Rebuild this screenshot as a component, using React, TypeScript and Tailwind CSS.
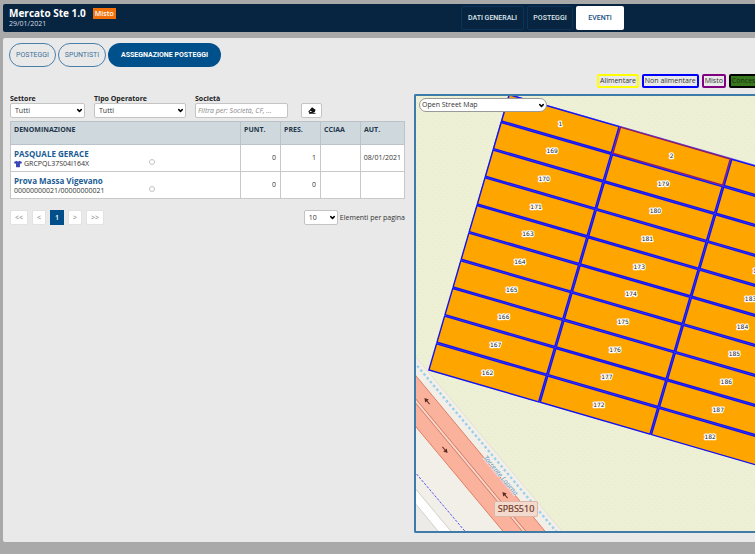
import React from "react";
import { ChevronDown } from "lucide-react";
import { FaTshirt } from "react-icons/fa";

const ROW = { x: -8.08, y: 27.67 };
const COL = { x: 111.3, y: 32.3 };
const ORIGIN = { x: 144.3, y: 27.8 };

const stalls = [
  ["1", "169", "170", "171", "163", "164", "165", "166", "167", "162"],
  ["2", "179", "180", "181", "173", "174", "175", "176", "177", "172"],
  ["", "", "", "190", "183", "184", "185", "186", "187", "182"],
];

function Stall({ col, row, label }: { col: number; row: number; label: string }) {
  const cx = ORIGIN.x + COL.x * col + ROW.x * row;
  const cy = ORIGIN.y + COL.y * col + ROW.y * row;
  const corner = (a: number, b: number) =>
    `${cx + COL.x * a * 0.493 + ROW.x * b * 0.472},${cy + COL.y * a * 0.493 + ROW.y * b * 0.472}`;
  const points = [corner(-1, -1), corner(1, -1), corner(1, 1), corner(-1, 1)].join(" ");
  return (
    <g>
      <polygon points={points} fill="#ffa500" stroke={label === "2" ? "#8b1a6b" : "#1414f0"} strokeWidth="1.4" />
      {label && (
        <text
          x={cx}
          y={cy + 2}
          textAnchor="middle"
          fontSize="6"
          fill="#222"
          stroke="#fff"
          strokeWidth="2.4"
          paintOrder="stroke"
          strokeLinejoin="round"
          fontFamily="'DejaVu Sans', sans-serif"
        >
          {label}
        </text>
      )}
    </g>
  );
}

function Arrow({ x, y, angle }: { x: number; y: number; angle: number }) {
  return (
    <g transform={`translate(${x} ${y}) rotate(${angle})`}>
      <path d="M-4 0H2" stroke="#5c2a20" strokeWidth="1" />
      <path d="M4 0L0 -2.3V2.3Z" fill="#5c2a20" />
    </g>
  );
}

function StallMap() {
  return (
    <svg className="block size-full" role="img" aria-label="Mappa dei posteggi">
      <defs>
        <pattern id="grass" width="6" height="6" patternUnits="userSpaceOnUse">
          <rect width="6" height="6" fill="#eef0d5" />
          <rect x="1" y="1" width="1" height="1" fill="#e6ebcd" />
          <rect x="4" y="4" width="1" height="1" fill="#e6ebcd" />
        </pattern>
      </defs>
      <rect width="100%" height="100%" fill="url(#grass)" />
      <polygon points="-2,259 150,440 -2,440" fill="#f2efe9" stroke="#e5dfd0" strokeWidth="1" />
      <path d="M-2 266L144 440" stroke="#9bcfe9" strokeWidth="2.4" strokeDasharray="2.5 2.5" />
      <polygon points="-2,277.5 133,440 91,440 -2,328.500" fill="#fab29c" stroke="#dc7f62" strokeWidth="1" />
      <path d="M-2 303L112 440" stroke="#c9705a" strokeWidth="3.4" />
      <path d="M-2 303L112 440" stroke="#f9d6c9" strokeWidth="2" />
      <path d="M-2 375L53 440" stroke="#5454f0" strokeWidth="1" strokeDasharray="2.5 1.5" />
      <polygon points="-2,391 39,440 -2,440" fill="#fff" stroke="#cfcfcf" strokeWidth="1" />
      <polygon points="-2,406 26,440 -2,440" fill="#edebe8" stroke="#cfcfcf" strokeWidth="1" />
      <Arrow x={11} y={305} angle={-130} />
      <Arrow x={29} y={354} angle={50} />
      <Arrow x={89} y={399} angle={-130} />
      <text
        transform="translate(67 362) rotate(50)"
        fontSize="7"
        fontStyle="italic"
        fill="#5f98bd"
        stroke="#f2efe9"
        strokeWidth="1"
        paintOrder="stroke"
        fontFamily="'Noto Sans', sans-serif"
      >
        Torrente Loorna
      </text>
      <rect x="78.5" y="405.5" width="43" height="15" rx="1.5" fill="#f3dacf" stroke="#dfb5a6" />
      <text x="100" y="416" textAnchor="middle" fontSize="9" fill="#743c28" stroke="#743c28" strokeWidth="0.2" fontFamily="'Noto Sans', sans-serif">
        SPBS510
      </text>
      <polygon points="92.7,-2.2 426,93.8 346,370.8 13,274.3" fill="#5a5aff" />
      {stalls.map((column, col) =>
        column.map((label, row) => <Stall key={`${col}-${row}`} col={col} row={row} label={label} />),
      )}
    </svg>
  );
}

function EraserIcon() {
  return (
    <svg viewBox="0 0 16 14" className="h-[7px] w-2" aria-hidden="true">
      <path d="M8 0.5L15 5.5L13.5 10.5L9 12H3L0.5 9.5Z" fill="#111" />
      <path d="M3 9.5L5 7.5L8.5 10H4Z" fill="#fff" />
      <path d="M2 13H15" stroke="#111" strokeWidth="1.5" />
    </svg>
  );
}

function Select({ id, value, className, label }: { id: string; value: string; className: string; label?: string }) {
  return (
    <div className="relative">
      <select
        id={id}
        aria-label={label}
        className={`block appearance-none border bg-white text-[#333] outline-none ${className}`}
      >
        <option>{value}</option>
      </select>
      <ChevronDown className="pointer-events-none absolute right-0.5 top-1 size-[7px] text-black" strokeWidth={5} />
    </div>
  );
}

const navButton = "h-6 rounded-xs border border-[#0c3359] font-[Roboto,sans-serif] text-[7px] font-medium text-[#dfe5ea]";
const tab = "h-6 rounded-full border border-[#4a7fa8] font-[Roboto,sans-serif] text-[7px] text-[#3d719b]";
const chip = "flex h-3.5 shrink-0 items-center rounded-xs border-2 px-px";
const cell = "border border-[#c8c8c8] px-1 text-right";
const head = "border border-[#bcc3c8] px-[3px] pt-[3px] text-left align-top text-[7px] font-bold text-[#23364a]";
const page = "h-[15px] rounded-xs border border-[#e2e2e2] bg-white text-[7px] text-[#777]";
const field = "h-[15px] rounded-xs border-[#c4c4c4]";

const operators = [
  { name: "PASQUALE GERACE", code: "GRCPQL37S04I164X", shirt: true, punt: 0, pres: 1, aut: "08/01/2021" },
  { name: "Prova Massa Vigevano", code: "00000000021/00000000021", shirt: false, punt: 0, pres: 0, aut: "" },
];

export default function App() {
  return (
    <div className="min-h-screen overflow-hidden bg-[#a9a9a9] pb-3 pl-[3px] pt-1 font-['Open_Sans',sans-serif] text-[7px] leading-[10px] text-[#333]">
      <header className="flex h-7 items-center rounded-l-xs bg-[#072541] pl-1.5 text-white">
        <div className="w-[452px] shrink-0">
          <div className="flex items-center gap-[7px]">
            <h1 className="text-[10px] font-bold leading-3">Mercato Ste 1.0</h1>
            <span className="bg-[#f36f0a] px-0.5 text-[7px] font-semibold leading-[11px]">Misto</span>
          </div>
          <p className="leading-[10px] text-[#d5dde4]">29/01/2021</p>
        </div>
        <nav className="flex shrink-0 gap-[3px]">
          <button className={`${navButton} w-[63px]`}>DATI GENERALI</button>
          <button className={`${navButton} w-[46px]`}>POSTEGGI</button>
          <button className="h-6 w-12 rounded-xs bg-white font-[Roboto,sans-serif] text-[7px] font-medium text-[#17527f]">EVENTI</button>
        </nav>
      </header>

      <main className="mt-1.5 rounded-l-xs bg-[#e9e9e9] pb-[9px] pl-[7px] pt-[5px]">
        <div className="-ml-px flex gap-0.5">
          <button className={`${tab} w-[47px]`}>POSTEGGI</button>
          <button className={`${tab} w-12`}>SPUNTISTI</button>
          <button className="h-6 w-[113px] rounded-full bg-[#00508c] font-[Roboto,sans-serif] text-[7px] font-bold text-white">
            ASSEGNAZIONE POSTEGGI
          </button>
        </div>

        <div className="mt-[7px] flex gap-[3px] overflow-hidden whitespace-nowrap pl-[587px]">
          <span className={`${chip} border-[#ffff00]`}>Alimentare</span>
          <span className={`${chip} border-[#0000ff]`}>Non alimentare</span>
          <span className={`${chip} border-[#800080]`}>Misto</span>
          <span className={`${chip} border-black bg-[#38761d] text-[#16300c]`}>Concessionario</span>
        </div>

        <div className="mt-1.5 flex gap-[9px]">
          <section className="w-[395px] shrink-0">
            <form className="flex items-end">
              <div className="mr-[9px]">
                <label htmlFor="settore" className="block font-bold leading-[9px] text-[#222]">Settore</label>
                <Select id="settore" value="Tutti" className={`${field} w-[75px] pl-1`} />
              </div>
              <div className="mr-[9px]">
                <label htmlFor="tipo" className="block font-bold leading-[9px] text-[#222]">Tipo Operatore</label>
                <Select id="tipo" value="Tutti" className={`${field} w-[92px] pl-1`} />
              </div>
              <div className="mr-[13px]">
                <label htmlFor="societa" className="block font-bold leading-[9px] text-[#222]">Società</label>
                <input
                  id="societa"
                  placeholder="Filtra per: Società, CF, ..."
                  className={`${field} block w-[93px] border bg-white px-0.5 italic placeholder:text-[#888]`}
                />
              </div>
              <button type="button" aria-label="Pulisci filtri" className={`${field} flex w-[21px] items-center justify-center border bg-white`}>
                <EraserIcon />
              </button>
            </form>

            <table className="mt-[3px] w-full table-fixed border-collapse bg-white">
              <thead>
                <tr className="h-[23px] bg-[#cfd8dd]">
                  <th className={head}>DENOMINAZIONE</th>
                  <th className={`${head} w-10`}>PUNT.</th>
                  <th className={`${head} w-10`}>PRES.</th>
                  <th className={`${head} w-10`}>CCIAA</th>
                  <th className={`${head} w-11`}>AUT.</th>
                </tr>
              </thead>
              <tbody>
                {operators.map((o) => (
                  <tr key={o.code} className="h-[27px]">
                    <td className="border border-[#c8c8c8] px-[3px]">
                      <div className="flex items-end">
                        <div className="w-[135px]">
                          <a href="#" className="block text-[8px] font-bold leading-[11px] text-[#1c5c94]">{o.name}</a>
                          <span className="flex items-center gap-0.5 leading-[10px]">
                            {o.shirt && <FaTshirt className="size-2 text-[#3c48b8]" />}
                            {o.code}
                          </span>
                        </div>
                        <input
                          type="radio"
                          name="operatore"
                          aria-label={o.name}
                          className="mb-1 size-1.5 appearance-none rounded-full border border-[#c4c4c4] bg-white"
                        />
                      </div>
                    </td>
                    <td className={cell}>{o.punt}</td>
                    <td className={cell}>{o.pres}</td>
                    <td className={cell}></td>
                    <td className={`${cell} pl-0 pr-[3px]`}>{o.aut}</td>
                  </tr>
                ))}
              </tbody>
            </table>

            <div className="mt-[11px] flex items-center">
              <div className="flex gap-1">
                <button className={`${page} w-[18px]`}>&lt;&lt;</button>
                <button className={`${page} w-3.5`}>&lt;</button>
                <button className="h-[15px] w-3.5 bg-[#004f8b] text-[7px] font-semibold text-white">1</button>
                <button className={`${page} w-3.5`}>&gt;</button>
                <button className={`${page} w-[18px]`}>&gt;&gt;</button>
              </div>
              <div className="ml-auto flex items-center gap-0.5">
                <Select id="elementi" value="10" className={`${field} w-[34px] pl-1`} />
                <label htmlFor="elementi">Elementi per pagina</label>
              </div>
            </div>
          </section>

          <section className="relative h-[439px] min-w-0 flex-1 overflow-hidden rounded-l-xs border-2 border-r-0 border-[#3f7ba8]">
            <StallMap />
            <div className="absolute left-[3px] top-0.5">
              <Select id="mappa" label="Mappa di base" value="Open Street Map" className="h-3.5 w-32 rounded-full border-[#999] pl-0.5" />
            </div>
          </section>
        </div>
      </main>
    </div>
  );
}
